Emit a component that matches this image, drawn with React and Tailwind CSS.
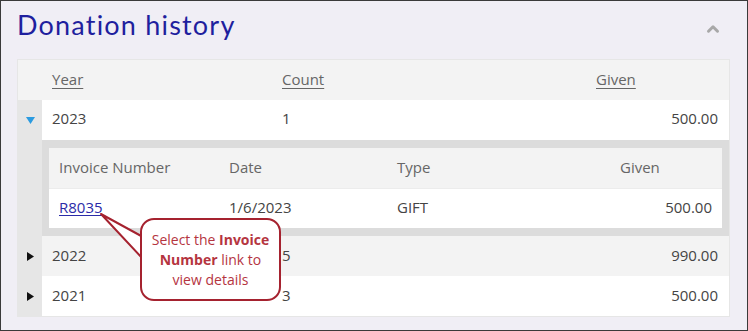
import { ChevronUp } from "lucide-react";

const rows = [
  { year: "2022", count: "5", given: "990.00", bg: "bg-[#f3f3f3]" },
  { year: "2021", count: "3", given: "500.00", bg: "bg-white" },
];

const Arrow = ({ open }) =>
  open ? (
    <svg width="9" height="7" viewBox="0 0 9 7">
      <path d="M0 0 H9 L4.5 7 Z" fill="#2b9be0" />
    </svg>
  ) : (
    <svg width="7" height="9" viewBox="0 0 7 9">
      <path d="M0 0 L7 4.5 L0 9 Z" fill="#111" />
    </svg>
  );

const App = () => {
  return (
    <div
      className="relative w-[748px] h-[331px] overflow-hidden border border-[#3a3a3a] bg-[#f0eef5] text-[#444]"
      style={{ fontFamily: "'Open Sans', 'Noto Sans', sans-serif" }}
    >
      <div className="flex items-center justify-between pl-[16px] pr-[25px] h-[44px] pt-[2px]">
        <h1 className="text-[27px] leading-none text-[#1f1f9e] tracking-[1.2px]" style={{ fontFamily: "Lato, sans-serif" }}>
          Donation history
        </h1>
        <ChevronUp size={18} strokeWidth={4} className="text-[#a8a8a8] mt-[10px]" />
      </div>

      <div className="mx-[16px] mt-[14px] w-[713px] border border-[#e6e6e6] bg-white text-[15px]">
        {/* header */}
        <div className="flex h-[40px] items-center bg-[#f3f3f3] pb-[2px] text-[#666]">
          <div className="w-[24px]" />
          <div className="grid flex-1 grid-cols-[230px_314px_1fr] pl-[10px] pr-[11px] underline underline-offset-[3px]">
            <span>Year</span>
            <span>Count</span>
            <span>Given</span>
          </div>
        </div>

        {/* 2023 expanded */}
        <div className="flex h-[40px] items-center bg-white">
          <div className="flex h-full w-[24px] items-center justify-center bg-[#e6e6e6]">
            <Arrow open />
          </div>
          <div className="grid flex-1 grid-cols-[230px_314px_1fr] pl-[10px] pr-[11px] pb-[3px]">
            <span>2023</span>
            <span>1</span>
            <span className="text-right">500.00</span>
          </div>
        </div>
        <div className="flex h-[96px]">
          <div className="w-[24px] bg-[#e6e6e6]" />
          <div className="flex-1 bg-[#dcdcdc] pt-[8px] pl-[7px] pr-[7px]">
            <div className="bg-white">
              <div className="grid h-[40px] grid-cols-[170px_168px_223px_1fr] items-center bg-[#f3f3f3] px-[10px] pb-[2px] text-[#666]">
                <span>Invoice Number</span>
                <span>Date</span>
                <span>Type</span>
                <span>Given</span>
              </div>
              <div className="grid h-[40px] grid-cols-[170px_168px_1fr_1fr] items-center border-t border-[#ececec] px-[10px] pb-[2px]">
                <a href="#" className="text-[#2b2ba8] underline underline-offset-[2px]">R8035</a>
                <span>1/6/2023</span>
                <span>GIFT</span>
                <span className="text-right">500.00</span>
              </div>
            </div>
          </div>
        </div>

        {rows.map((r) => (
          <div key={r.year} className={`flex h-[40px] items-center ${r.bg}`}>
            <div className="flex h-full w-[24px] items-center justify-center bg-[#e6e6e6]">
              <Arrow />
            </div>
            <div className="grid flex-1 grid-cols-[230px_314px_1fr] pl-[10px] pr-[11px] pb-[2px]">
              <span>{r.year}</span>
              <span>{r.count}</span>
              <span className="text-right">{r.given}</span>
            </div>
          </div>
        ))}
      </div>

      {/* callout */}
      <svg className="absolute left-[98px] top-[210px]" width="50" height="54" viewBox="0 0 50 54">
        <path d="M2 3 L44 26 L44 48 Z" fill="white" stroke="#a5222f" strokeWidth="2" strokeLinejoin="round" />
      </svg>
      <div className="absolute left-[139px] top-[217px] flex h-[83px] w-[141px] items-center justify-center rounded-[14px] border-2 border-[#a5222f] bg-white text-center text-[14px] leading-[20px] text-[#b5353f]">
        <p>
          Select the <b>Invoice</b>
          <br />
          <b>Number</b> link to
          <br />
          view details
        </p>
      </div>
    </div>
  );
};

export default App;
